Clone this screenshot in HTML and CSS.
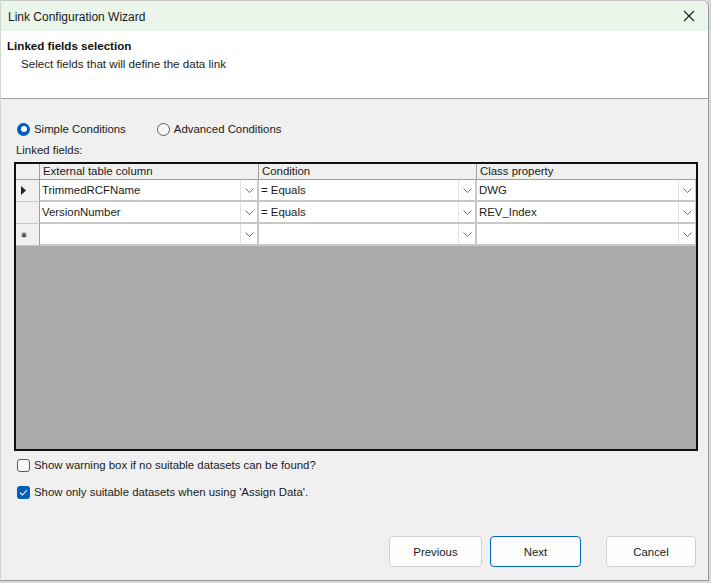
FILE: index.html
```html
<!DOCTYPE html>
<html>
<head>
<meta charset="utf-8">
<link rel="stylesheet" href="styles.css">
</head>
<body>
<div class="window">
  <div class="titlebar">
    <span class="title">Link Configuration Wizard</span>
    <svg class="close" width="12" height="12" viewBox="0 0 12 12"><path d="M1 1L11 11M11 1L1 11" stroke="#1a1a1a" stroke-width="1.1" fill="none"/></svg>
  </div>
  <div class="header">
    <div class="h-title">Linked fields selection</div>
    <div class="h-sub">Select fields that will define the data link</div>
  </div>
  <div class="content">
    <div class="radios">
      <label class="radio"><span class="rb rb-on"></span>Simple Conditions</label>
      <label class="radio"><span class="rb"></span>Advanced Conditions</label>
    </div>
    <div class="lbl">Linked fields:</div>
    <div class="grid">
      <div class="row head">
        <div class="rh"></div>
        <div class="hc">External table column</div>
        <div class="hc">Condition</div>
        <div class="hc">Class property</div>
      </div>
      <div class="row">
        <div class="rh"><svg width="6" height="9" viewBox="0 0 6 9"><path d="M0 0L5 4.5L0 9Z" fill="#222"/></svg></div>
        <div class="cell"><span class="val">TrimmedRCFName</span><span class="dd"><svg width="9" height="5" viewBox="0 0 9 5"><path d="M0.5 0.5L4.5 4.5L8.5 0.5" stroke="#707070" fill="none"/></svg></span></div>
        <div class="cell"><span class="val">= Equals</span><span class="dd"><svg width="9" height="5" viewBox="0 0 9 5"><path d="M0.5 0.5L4.5 4.5L8.5 0.5" stroke="#707070" fill="none"/></svg></span></div>
        <div class="cell"><span class="val">DWG</span><span class="dd"><svg width="9" height="5" viewBox="0 0 9 5"><path d="M0.5 0.5L4.5 4.5L8.5 0.5" stroke="#707070" fill="none"/></svg></span></div>
      </div>
      <div class="row">
        <div class="rh"></div>
        <div class="cell"><span class="val">VersionNumber</span><span class="dd"><svg width="9" height="5" viewBox="0 0 9 5"><path d="M0.5 0.5L4.5 4.5L8.5 0.5" stroke="#707070" fill="none"/></svg></span></div>
        <div class="cell"><span class="val">= Equals</span><span class="dd"><svg width="9" height="5" viewBox="0 0 9 5"><path d="M0.5 0.5L4.5 4.5L8.5 0.5" stroke="#707070" fill="none"/></svg></span></div>
        <div class="cell"><span class="val">REV_Index</span><span class="dd"><svg width="9" height="5" viewBox="0 0 9 5"><path d="M0.5 0.5L4.5 4.5L8.5 0.5" stroke="#707070" fill="none"/></svg></span></div>
      </div>
      <div class="row">
        <div class="rh"><svg width="6" height="6" viewBox="0 0 6 6"><path d="M3 0.3V5.7M0.6 1.6L5.4 4.4M5.4 1.6L0.6 4.4" stroke="#555" stroke-width="1.2"/></svg></div>
        <div class="cell"><span class="val"></span><span class="dd"><svg width="9" height="5" viewBox="0 0 9 5"><path d="M0.5 0.5L4.5 4.5L8.5 0.5" stroke="#707070" fill="none"/></svg></span></div>
        <div class="cell"><span class="val"></span><span class="dd"><svg width="9" height="5" viewBox="0 0 9 5"><path d="M0.5 0.5L4.5 4.5L8.5 0.5" stroke="#707070" fill="none"/></svg></span></div>
        <div class="cell"><span class="val"></span><span class="dd"><svg width="9" height="5" viewBox="0 0 9 5"><path d="M0.5 0.5L4.5 4.5L8.5 0.5" stroke="#707070" fill="none"/></svg></span></div>
      </div>
    </div>
    <label class="check c1"><span class="cb"></span>Show warning box if no suitable datasets can be found?</label>
    <label class="check c2"><span class="cb cb-on"><svg width="9" height="7" viewBox="0 0 9 7"><path d="M1 3.6L3.4 6L8 1" stroke="#fff" stroke-width="1.1" fill="none"/></svg></span>Show only suitable datasets when using 'Assign Data'.</label>
    <div class="buttons">
      <button class="btn b-prev">Previous</button>
      <button class="btn b-next">Next</button>
      <button class="btn b-cancel">Cancel</button>
    </div>
  </div>
</div>
</body>
</html>
```
FILE: styles.css
```css
html, body {
  margin: 0;
  padding: 0;
  background: #d8d8d8;
}
body {
  font-family: "Liberation Sans", Arial, sans-serif;
  font-size: 11.4px;
  color: #1a1a1a;
}
.window {
  box-sizing: border-box;
  width: 709px;
  height: 581px;
  background: #f0f0f0;
  border: 1px solid #9a9a9a;
  border-top-color: #c8c8c8;
  border-left-color: #cfd8cf;
  border-top-right-radius: 7px;
  overflow: hidden;
  display: flex;
  flex-direction: column;
}
.titlebar {
  height: 30px;
  background: #eaf6ea;
  display: flex;
  align-items: center;
  justify-content: space-between;
  padding: 0 10px 0 7px;
  flex-shrink: 0;
}
.title {
  font-size: 12px;
  color: #1a1a1a;
  padding-top: 1px;
}
.close {
  margin-right: 3px;
}
.header {
  height: 68px;
  background: #fff;
  border-bottom: 1px solid #a0a0a0;
  flex-shrink: 0;
  box-sizing: border-box;
  padding-top: 8px;
  font-size: 11.6px;
}
.h-title {
  font-weight: bold;
  padding-left: 6px;
  line-height: 13px;
  color: #111;
}
.h-sub {
  padding-left: 20px;
  margin-top: 5px;
  line-height: 13px;
  color: #222;
}
.content {
  padding: 21px 0 0 13px;
  display: flex;
  flex-direction: column;
}
.radios {
  display: flex;
  height: 18px;
  align-items: center;
}
.radio {
  display: flex;
  align-items: center;
  margin-left: 3px;
}
.radio + .radio {
  margin-left: 31px;
}
.rb {
  box-sizing: border-box;
  width: 13px;
  height: 13px;
  border-radius: 50%;
  border: 1px solid #5a5a5a;
  background: #f8f8f8;
  margin-right: 4px;
  position: relative;
}
.rb-on {
  border: none;
  background: #005fb8;
}
.rb-on::after {
  content: "";
  position: absolute;
  left: 3.5px;
  top: 3.5px;
  width: 6px;
  height: 6px;
  border-radius: 50%;
  background: #fff;
}
.lbl {
  margin-top: 5px;
  margin-left: 2px;
  line-height: 14px;
}
.grid {
  margin-top: 5px;
  box-sizing: border-box;
  width: 684px;
  height: 289px;
  border: 2px solid #111;
  background: #ababab;
}
.row {
  display: grid;
  grid-template-columns: 24px 219px 218px 219px;
}
.head .rh, .hc {
  height: 16px;
  background: #f0f0f0;
  box-sizing: border-box;
  border-right: 1px solid #a0a0a0;
  border-bottom: 1px solid #a0a0a0;
}
.hc {
  padding-left: 3px;
  line-height: 15px;
  white-space: nowrap;
}
.hc:last-child {
  border-right: none;
}
.rh {
  height: 22px;
  box-sizing: border-box;
  background: #f0f0f0;
  border-right: 1px solid #a0a0a0;
  border-bottom: 1px solid #c8c8c8;
  display: flex;
  align-items: center;
  padding-left: 5px;
}
.cell {
  height: 22px;
  box-sizing: border-box;
  background: #fff;
  border-right: 2px solid #c8c8c8;
  border-bottom: 2px solid #c8c8c8;
  display: flex;
}
.cell:last-child {
  border-right: 1px solid #c8c8c8;
}
.val {
  flex: 1;
  padding-left: 2px;
  line-height: 20px;
  white-space: nowrap;
}
.dd {
  width: 16px;
  border-left: 1px solid #e4e4e4;
  display: flex;
  align-items: center;
  justify-content: center;
}
.check {
  display: flex;
  align-items: center;
  height: 16px;
  margin-left: 3px;
}
.c1 {
  margin-top: 6px;
}
.c2 {
  margin-top: 11px;
}
.cb {
  box-sizing: border-box;
  width: 13px;
  height: 13px;
  border-radius: 3px;
  border: 1px solid #5a5a5a;
  background: #f8f8f8;
  margin-right: 4px;
  display: flex;
  align-items: center;
  justify-content: center;
}
.cb-on {
  border: none;
  background: #005fb8;
}
.buttons {
  display: flex;
  margin-top: 36px;
  padding-left: 375px;
}
.btn {
  box-sizing: border-box;
  height: 31px;
  background: #fdfdfd;
  border: 1px solid #d0d0d0;
  border-radius: 4px;
  font-family: "Liberation Sans", Arial, sans-serif;
  font-size: 11.4px;
  color: #1a1a1a;
  padding: 0;
}
.b-prev {
  width: 93px;
}
.b-next {
  width: 91px;
  margin-left: 8px;
  border-color: #0067c0;
}
.b-cancel {
  width: 90px;
  margin-left: 25px;
}
```
